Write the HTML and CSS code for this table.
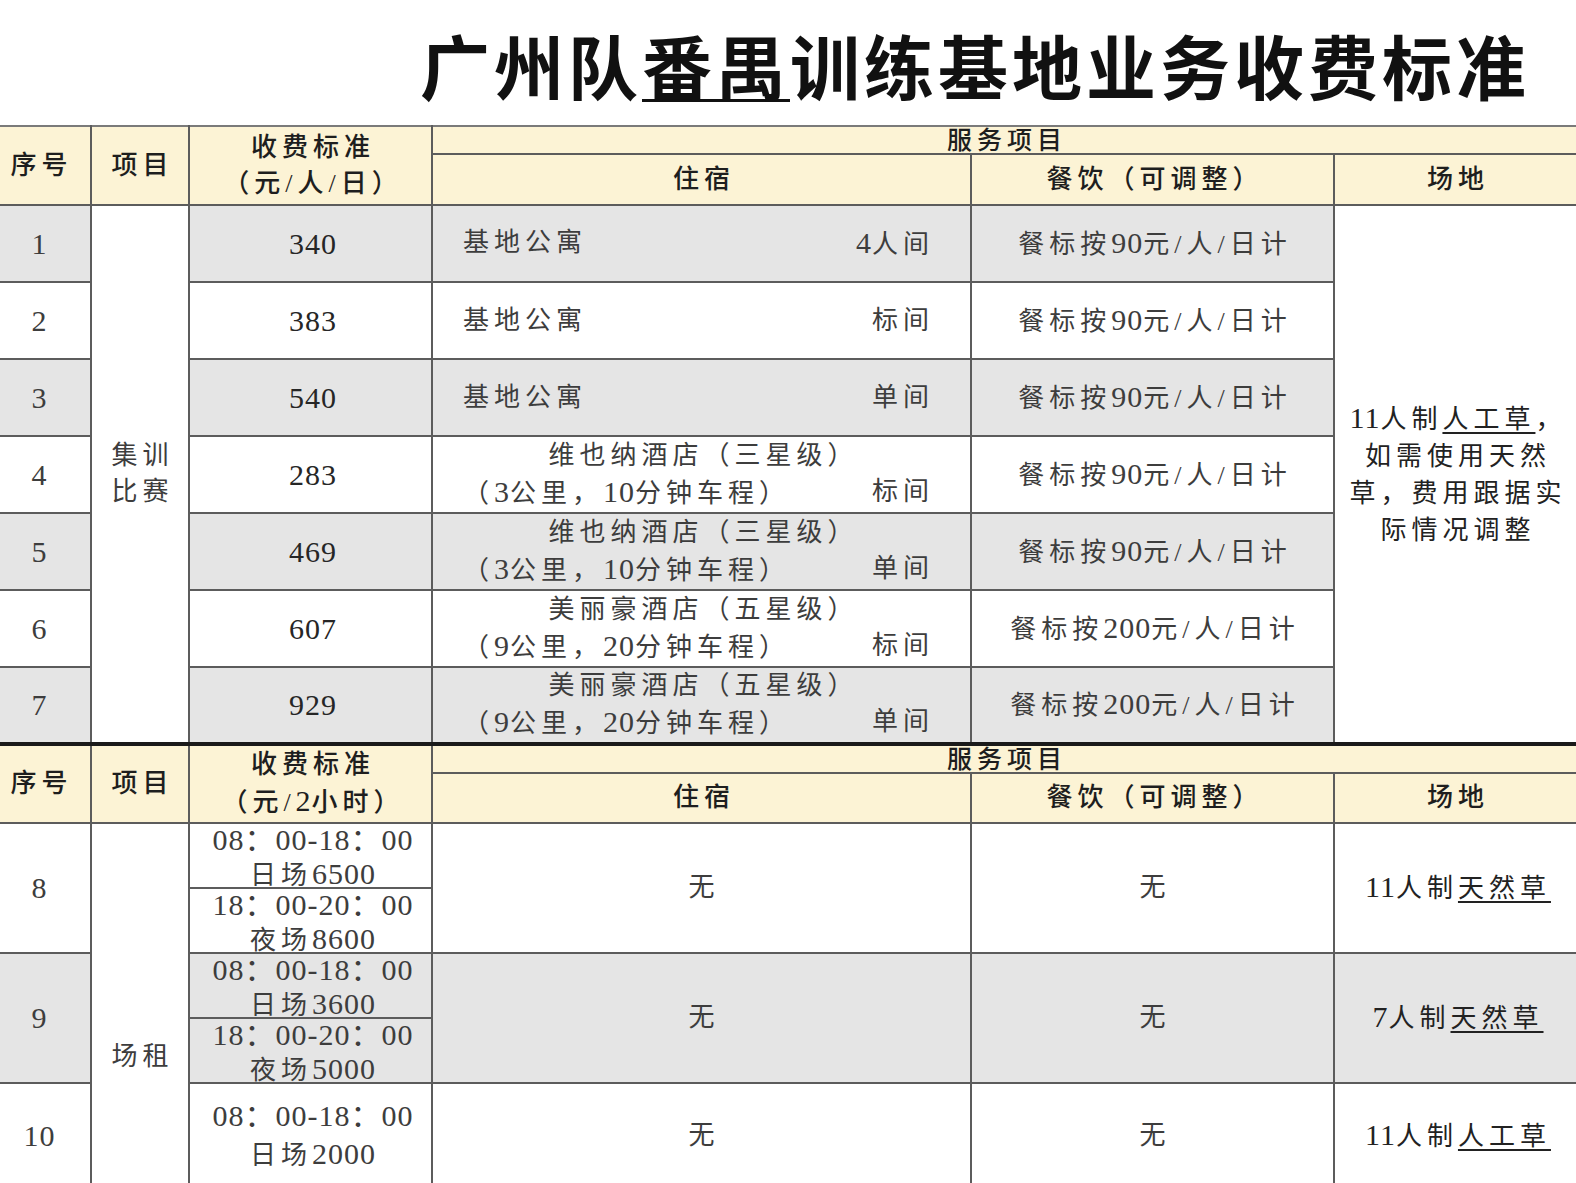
FILE: index.html
```html
<!DOCTYPE html>
<html lang="zh-CN">
<head>
<meta charset="utf-8">
<title>广州队番禺训练基地业务收费标准</title>
<link rel="stylesheet" href="styles.css">
</head>
<body>
<div class="page">
  <h1 class="title">广州队<u>番禺</u>训练基地业务收费标准</h1>
  <table class="fees">
    <colgroup>
      <col class="c-no"><col class="c-item"><col class="c-fee"><col class="c-stay"><col class="c-meal"><col class="c-venue">
    </colgroup>
    <tbody>
      <tr class="ha">
        <th rowspan="2" class="first">序号</th>
        <th rowspan="2">项目</th>
        <th rowspan="2">收费标准<br>（元/人/日）</th>
        <th colspan="3" class="svc last">服务项目</th>
      </tr>
      <tr class="hb">
        <th>住宿</th><th>餐饮（可调整）</th><th class="last">场地</th>
      </tr>

      <tr class="r g">
        <td class="first">1</td>
        <td rowspan="7" class="merge">集训<br>比赛</td>
        <td class="num">340</td>
        <td class="stay"><div class="line"><span>基地公寓</span><span><span class="n">4</span>人间</span></div></td>
        <td>餐标按<span class="n">90</span>元/人/日计</td>
        <td rowspan="7" class="venue last"><span class="n">11</span>人制<u>人工草</u>，<br>如需使用天然<br>草，费用跟据实<br>际情况调整</td>
      </tr>
      <tr class="r">
        <td class="first">2</td>
        <td class="num">383</td>
        <td class="stay"><div class="line"><span>基地公寓</span><span>标间</span></div></td>
        <td>餐标按<span class="n">90</span>元/人/日计</td>
      </tr>
      <tr class="r g">
        <td class="first">3</td>
        <td class="num">540</td>
        <td class="stay"><div class="line"><span>基地公寓</span><span>单间</span></div></td>
        <td>餐标按<span class="n">90</span>元/人/日计</td>
      </tr>
      <tr class="r">
        <td class="first">4</td>
        <td class="num">283</td>
        <td class="stay"><div class="hotel">维也纳酒店（三星级）</div><div class="line"><span>（<span class="n">3</span>公里，<span class="n">10</span>分钟车程）</span><span>标间</span></div></td>
        <td>餐标按<span class="n">90</span>元/人/日计</td>
      </tr>
      <tr class="r g">
        <td class="first">5</td>
        <td class="num">469</td>
        <td class="stay"><div class="hotel">维也纳酒店（三星级）</div><div class="line"><span>（<span class="n">3</span>公里，<span class="n">10</span>分钟车程）</span><span>单间</span></div></td>
        <td>餐标按<span class="n">90</span>元/人/日计</td>
      </tr>
      <tr class="r">
        <td class="first">6</td>
        <td class="num">607</td>
        <td class="stay"><div class="hotel">美丽豪酒店（五星级）</div><div class="line"><span>（<span class="n">9</span>公里，<span class="n">20</span>分钟车程）</span><span>标间</span></div></td>
        <td>餐标按<span class="n">200</span>元/人/日计</td>
      </tr>
      <tr class="r g">
        <td class="first">7</td>
        <td class="num">929</td>
        <td class="stay"><div class="hotel">美丽豪酒店（五星级）</div><div class="line"><span>（<span class="n">9</span>公里，<span class="n">20</span>分钟车程）</span><span>单间</span></div></td>
        <td>餐标按<span class="n">200</span>元/人/日计</td>
      </tr>

      <tr class="sa">
        <th rowspan="2" class="first">序号</th>
        <th rowspan="2">项目</th>
        <th rowspan="2">收费标准<br>（元/<span class="n">2</span>小时）</th>
        <th colspan="3" class="svc last">服务项目</th>
      </tr>
      <tr class="sb">
        <th>住宿</th><th>餐饮（可调整）</th><th class="last">场地</th>
      </tr>

      <tr class="big">
        <td class="first">8</td>
        <td rowspan="3" class="merge rent">场租</td>
        <td class="split"><div class="half"><span class="n">08：00-18：00</span><br>日场<span class="n">6500</span></div><div class="half"><span class="n">18：00-20：00</span><br>夜场<span class="n">8600</span></div></td>
        <td>无</td>
        <td>无</td>
        <td class="field last"><span class="n">11</span>人制<u>天然草</u></td>
      </tr>
      <tr class="big g">
        <td class="first">9</td>
        <td class="split"><div class="half"><span class="n">08：00-18：00</span><br>日场<span class="n">3600</span></div><div class="half"><span class="n">18：00-20：00</span><br>夜场<span class="n">5000</span></div></td>
        <td>无</td>
        <td>无</td>
        <td class="field last"><span class="n">7</span>人制<u>天然草</u></td>
      </tr>
      <tr class="end">
        <td class="first">10</td>
        <td><span class="n">08：00-18：00</span><br>日场<span class="n">2000</span></td>
        <td>无</td>
        <td>无</td>
        <td class="field last"><span class="n">11</span>人制<u>人工草</u></td>
      </tr>
    </tbody>
  </table>
</div>
</body>
</html>
```

FILE: styles.css
```css
html, body {
  margin: 0;
  padding: 0;
  background: #ffffff;
}

.page {
  width: 1576px;
  height: 1183px;
  overflow: hidden;
  font-family: "Liberation Serif", "Noto Sans CJK SC", serif;
  color: #3d3d3d;
}

.title {
  margin: 0;
  padding: 30px 0 25px 420px;
  font-family: "Noto Sans CJK SC", sans-serif;
  font-weight: 700;
  font-size: 70px;
  line-height: 70px;
  letter-spacing: 4px;
  white-space: nowrap;
  color: #111111;
}

.title u {
  text-decoration-thickness: 3px;
  text-underline-offset: 4px;
}

.fees {
  border-collapse: collapse;
  table-layout: fixed;
  width: 1588px;
  margin-left: -12px;
  font-size: 26px;
  letter-spacing: 5px;
}

.c-no { width: 103px; }
.c-item { width: 98px; }
.c-fee { width: 243px; }
.c-stay { width: 539px; }
.c-meal { width: 363px; }
.c-venue { width: 242px; }

.fees td,
.fees th {
  border: 2px solid #5c5c5c;
  padding: 0 0 0 5px;
  text-align: center;
  vertical-align: middle;
  line-height: 36px;
  white-space: nowrap;
  font-weight: 400;
}

.fees .first { border-left: none; }
.fees .last { border-right: none; }

.fees th {
  background: #fcf3d5;
  color: #1e1e1e;
  font-weight: 500;
}

.ha th { border-top: 2px solid #7a7a7a; }

.ha { height: 26px; }
.hb { height: 51px; }

.fees .svc {
  vertical-align: top;
  line-height: 24px;
  font-size: 25px;
  padding-top: 2px;
}

.r { height: 77px; }
.g td { background: #e5e5e5; }
.fees .merge,
.fees .venue { background: #ffffff; }

.n,
.fees td.first,
.fees td.num {
  font-size: 30px;
  letter-spacing: 1px;
}

.fees td.first { padding-left: 1px; }

.fees td.num { color: #262626; }

.fees .stay {
  text-align: left;
  padding: 0 36px 0 30px;
}

.stay .line {
  display: flex;
  justify-content: space-between;
}

.stay .hotel {
  text-align: center;
  padding-left: 10px;
}

.fees .venue {
  line-height: 37px;
  color: #222222;
}

.venue u,
.field u {
  text-decoration-thickness: 1.5px;
  text-underline-offset: 4px;
}

.sa th { border-top: 4px solid #1a1a1a; }
.sa { height: 23px; }
.sb { height: 50px; }

.big { height: 128px; }
.end { height: 106px; }

.fees .rent {
  vertical-align: top;
  padding-top: 215px;
}

.fees .split {
  padding: 0;
  vertical-align: top;
}

.split .half {
  height: 63px;
  line-height: 31.5px;
  padding-left: 5px;
}

.split .half + .half {
  border-top: 2px solid #5c5c5c;
}

.field { color: #222222; }
```
